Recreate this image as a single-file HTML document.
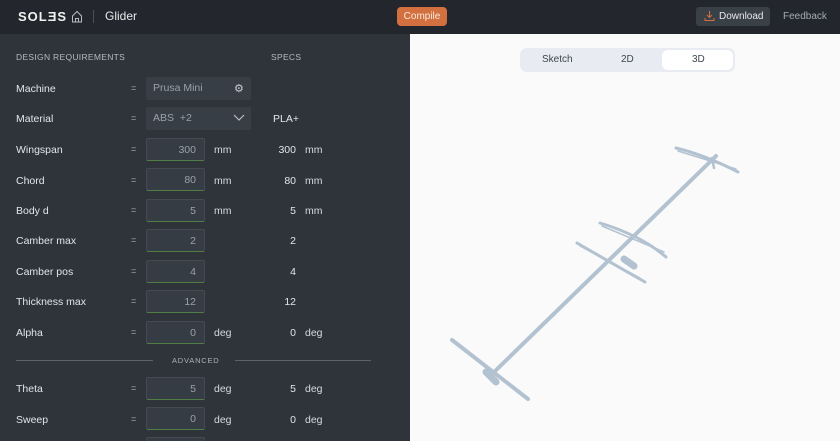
<!DOCTYPE html>
<html style="overflow:hidden;height:441px"><head><meta charset="utf-8"><style>
*{box-sizing:border-box;margin:0;padding:0}
body{width:840px;height:441px;overflow:hidden;font-family:"Liberation Sans",sans-serif;background:#2f343b;position:relative}
.hdr{position:absolute;left:0;top:0;width:840px;height:34px;background:#23272d}
.abs{position:absolute}
.panel{position:absolute;left:0;top:34px;width:410px;height:407px;background:#2f343b}
.view{position:absolute;left:410px;top:34px;width:430px;height:407px;background:#fafafa}
.lbl{position:absolute;left:16px;font-size:10.5px;color:#e2e5e9}
.eq{position:absolute;left:131px;font-size:9px;color:#a9aeb5}
.inp{position:absolute;left:146px;width:59px;height:23px;background:#363c44;border:1px solid #434a53;border-bottom:1px solid #4f7d44;border-radius:2px;color:#9ba1a9;font-size:10.5px;text-align:right;padding-right:8px;line-height:22px}
.unit{position:absolute;left:214px;font-size:10.5px;color:#d6d9dd}
.sv{position:absolute;width:296px;left:0;text-align:right;font-size:10.5px;color:#e2e5e9}
.su{position:absolute;left:305px;font-size:10.5px;color:#d6d9dd}
</style></head><body>
<div class="hdr">
<div class="abs" style="left:18px;top:9px;font-size:13px;font-weight:bold;color:#f2f2f2;letter-spacing:1px">SOLƎS</div>
<svg class="abs" style="left:71px;top:10px" width="12" height="13" viewBox="0 0 12 13"><path d="M1.5 6 L6 1.5 L10.5 6 V12 H1.5 Z M4.5 12 V8.5 H7.5 V12" fill="none" stroke="#b8bcc2" stroke-width="1"/></svg>
<div class="abs" style="left:93px;top:10px;width:1px;height:13px;background:#4a5058"></div>
<div class="abs" style="left:105px;top:9px;font-size:12px;color:#e6e8eb">Glider</div>
<div class="abs" style="left:397px;top:7px;width:50px;height:19px;background:#d2703f;border-radius:4px;color:#fbe9df;font-size:10px;text-align:center;line-height:19px">Compile</div>
<div class="abs" style="left:696px;top:7px;width:74px;height:19px;background:#3a4048;border-radius:3px;color:#e6e8eb;font-size:10px;line-height:19px;padding-left:23px">Download</div>
<svg class="abs" style="left:704px;top:10px" width="11" height="12" viewBox="0 0 11 12"><path d="M5.5 1 V7.5 M3 5 L5.5 7.5 L8 5 M1 8 V10.5 H10 V8" fill="none" stroke="#d2703f" stroke-width="1"/></svg>
<div class="abs" style="left:783px;top:11px;font-size:10px;color:#a5abb3">Feedback</div>
</div>
<div class="panel"></div>
<div class="abs" style="left:16px;top:52px;font-size:8.5px;color:#b4bac1;letter-spacing:.3px">DESIGN REQUIREMENTS</div>
<div class="abs" style="left:271px;top:52px;font-size:8.5px;color:#b4bac1;letter-spacing:.3px">SPECS</div>

<div class="lbl" style="top:83px">Machine</div><div class="eq" style="top:83px">=</div>
<div class="abs" style="left:146px;top:77px;width:105px;height:23px;background:#383e46;border-radius:2px;color:#9ba1a9;font-size:10.5px;line-height:23px;padding-left:7px">Prusa Mini</div>
<div class="abs" style="left:234px;top:82px;color:#c8ccd1;font-size:11px">⚙</div>

<div class="lbl" style="top:113px">Material</div><div class="eq" style="top:113px">=</div>
<div class="abs" style="left:146px;top:107px;width:105px;height:23px;background:#383e46;border-radius:2px;color:#9ba1a9;font-size:10.5px;line-height:23px;padding-left:7px">ABS &nbsp;+2</div>
<svg class="abs" style="left:233px;top:114px" width="12" height="8"><path d="M1 1 L6 6 L11 1" fill="none" stroke="#b8bcc2" stroke-width="1.2"/></svg>
<div class="abs" style="left:273px;top:113px;font-size:10.5px;color:#e2e5e9">PLA+</div>

<div class="lbl" style="top:144px">Wingspan</div><div class="eq" style="top:144px">=</div><div class="inp" style="top:138px">300</div><div class="unit" style="top:144px">mm</div><div class="sv" style="top:144px">300</div><div class="su" style="top:144px">mm</div>
<div class="lbl" style="top:175px">Chord</div><div class="eq" style="top:175px">=</div><div class="inp" style="top:168px">80</div><div class="unit" style="top:175px">mm</div><div class="sv" style="top:175px">80</div><div class="su" style="top:175px">mm</div>
<div class="lbl" style="top:205px">Body d</div><div class="eq" style="top:205px">=</div><div class="inp" style="top:199px">5</div><div class="unit" style="top:205px">mm</div><div class="sv" style="top:205px">5</div><div class="su" style="top:205px">mm</div>
<div class="lbl" style="top:235px">Camber max</div><div class="eq" style="top:235px">=</div><div class="inp" style="top:229px">2</div><div class="sv" style="top:235px">2</div>
<div class="lbl" style="top:266px">Camber pos</div><div class="eq" style="top:266px">=</div><div class="inp" style="top:260px">4</div><div class="sv" style="top:266px">4</div>
<div class="lbl" style="top:296px">Thickness max</div><div class="eq" style="top:296px">=</div><div class="inp" style="top:290px">12</div><div class="sv" style="top:296px">12</div>
<div class="lbl" style="top:327px">Alpha</div><div class="eq" style="top:327px">=</div><div class="inp" style="top:321px">0</div><div class="unit" style="top:327px">deg</div><div class="sv" style="top:327px">0</div><div class="su" style="top:327px">deg</div>

<div class="abs" style="left:16px;top:360px;width:137px;height:1px;background:#5b636c"></div>
<div class="abs" style="left:172px;top:356px;font-size:7.5px;color:#aab0b8;letter-spacing:.8px">ADVANCED</div>
<div class="abs" style="left:235px;top:360px;width:136px;height:1px;background:#5b636c"></div>

<div class="lbl" style="top:383px">Theta</div><div class="eq" style="top:383px">=</div><div class="inp" style="top:377px">5</div><div class="unit" style="top:383px">deg</div><div class="sv" style="top:383px">5</div><div class="su" style="top:383px">deg</div>
<div class="lbl" style="top:414px">Sweep</div><div class="eq" style="top:414px">=</div><div class="inp" style="top:407px">0</div><div class="unit" style="top:414px">deg</div><div class="sv" style="top:414px">0</div><div class="su" style="top:414px">deg</div>
<div class="inp" style="top:437px;height:4px;border-bottom:none"></div>

<div class="view"></div>
<div class="abs" style="left:520px;top:48px;width:215px;height:24px;background:#e8ebf1;border-radius:7px"></div>
<div class="abs" style="left:662px;top:50px;width:71px;height:20px;background:#fff;border-radius:6px"></div>
<div class="abs" style="left:542px;top:54px;font-size:10px;color:#3f4650">Sketch</div>
<div class="abs" style="left:621px;top:54px;font-size:10px;color:#3f4650">2D</div>
<div class="abs" style="left:692px;top:54px;font-size:10px;color:#3f4650">3D</div>

<svg class="abs" style="left:0;top:0" width="840" height="441" viewBox="0 0 840 441" fill="none" stroke="#b3c2d0" stroke-linecap="round">
<path d="M490 376 L716 156" stroke-width="4"/>
<path d="M452 340 L528 399" stroke-width="4"/>
<path d="M486 372 L496 382" stroke-width="7"/>
<path d="M676 148 Q705 155 738 172" stroke-width="3"/>
<path d="M678 151 L736 169" stroke-width="1.5"/>
<path d="M600 223 Q640 235 666 257" stroke-width="3"/>
<path d="M602 226 L664 252" stroke-width="1.5"/>
<path d="M577 243 Q615 265 645 282" stroke-width="3"/>
<path d="M580 246 L640 278" stroke-width="1.5"/>
<path d="M624 259 L634 266" stroke-width="7"/>
<path d="M712 158 L714 168" stroke-width="2.5"/>
</svg>
</body></html>
